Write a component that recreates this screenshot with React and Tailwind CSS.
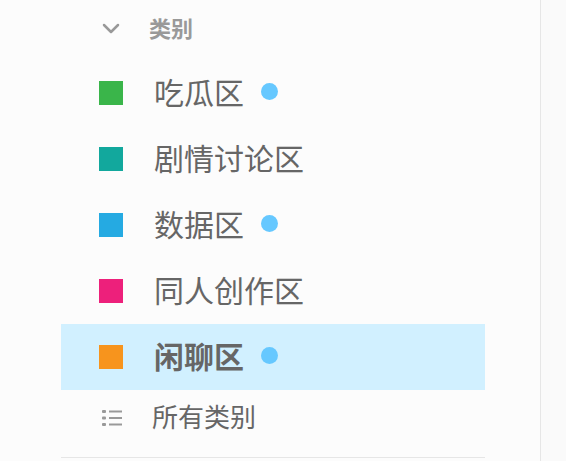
const categories = [
  { name: "吃瓜区", color: "bg-[#3ab54a]", dot: true },
  { name: "剧情讨论区", color: "bg-[#12a89d]", dot: false },
  { name: "数据区", color: "bg-[#25aae2]", dot: true },
  { name: "同人创作区", color: "bg-[#ed207b]", dot: false },
  { name: "闲聊区", color: "bg-[#f7941d]", dot: true, active: true },
];

const ListIcon = () => (
  <svg width="20" height="18" viewBox="0 0 20 18" fill="#999">
    <rect x="0" y="1" width="4" height="3" rx="1" />
    <rect x="7" y="1.5" width="13" height="2" />
    <rect x="0" y="7.5" width="4" height="3" rx="1" />
    <rect x="7" y="8" width="13" height="2" />
    <rect x="0" y="14" width="4" height="3" rx="1" />
    <rect x="7" y="14.5" width="13" height="2" />
  </svg>
);

export default function App() {
  return (
    <div
      className="flex min-h-[461px] bg-[#fafafa]"
      style={{ fontFamily: '"Noto Sans CJK SC", "Noto Sans", sans-serif' }}
    >
      <div className="w-[541px] h-[461px] bg-[#fcfcfc] border-r border-[#e6e6e6] pl-[61px]">
        <div className="w-[424px] border-b border-[#e6e6e6]">
          <div className="h-[56px] flex items-center pl-[41px]">
            <svg width="18" height="11" viewBox="0 0 18 11" fill="none" stroke="#999" strokeWidth="2.5" strokeLinecap="round" strokeLinejoin="round">
              <path d="M2 2l7 7 7-7" />
            </svg>
            <span className="ml-[29px] pb-[3px] text-[22px] font-bold text-[#999] leading-none">类别</span>
          </div>
          <div className="pt-[4px]">
            {categories.map((c) => (
              <div
                key={c.name}
                className={`h-[66px] flex items-center pl-[38px] ${c.active ? "bg-[#d1f0ff]" : ""}`}
              >
                <span className={`w-[24px] h-[24px] ${c.color}`} />
                <span
                  className={`ml-[31px] pb-[5px] text-[30px] leading-none text-[#666] ${c.active ? "font-bold" : ""}`}
                >
                  {c.name}
                </span>
                {c.dot && <span className="ml-[17px] mb-[3px] w-[17px] h-[17px] rounded-full bg-[#66c8ff]" />}
              </div>
            ))}
            <div className="h-[56px] flex items-center pl-[41px]">
              <ListIcon />
              <span className="ml-[30px] pb-[4px] text-[26px] leading-none text-[#666]">所有类别</span>
            </div>
          </div>
          <div className="h-[11px]" />
        </div>
      </div>
    </div>
  );
}
